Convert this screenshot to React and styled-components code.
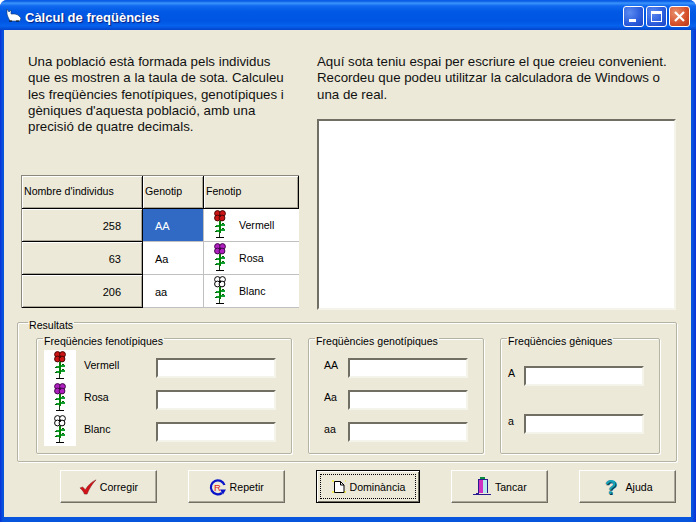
import React from 'react';
import styled, { createGlobalStyle } from 'styled-components';

const GlobalStyle = createGlobalStyle`
  html, body {
    margin: 0;
    padding: 0;
    background: #fff;
  }
  * {
    box-sizing: border-box;
  }
`;

const Window = styled.div`
  width: 696px;
  height: 522px;
  display: flex;
  flex-direction: column;
  overflow: hidden;
  border-radius: 7px 7px 0 0;
  font-family: "Liberation Sans", Arial, sans-serif;
  color: #000;
  background: linear-gradient(90deg, #0831d9 0, #0855dd 3px, #0855dd 692px, #0831d9 696px);
`;

const TitleBar = styled.div`
  height: 30px;
  flex: none;
  display: flex;
  align-items: center;
  padding: 2px 6px 0 6px;
  background: linear-gradient(
    180deg,
    #0a5be0 0%,
    #0a5fe8 4%,
    #3c95fb 10%,
    #0f68ee 20%,
    #0058e4 40%,
    #0056e2 70%,
    #0662ee 86%,
    #0445cc 100%
  );
`;

const TitleText = styled.span`
  margin-left: 3px;
  padding-top: 2px;
  color: #fff;
  font-size: 13px;
  font-weight: bold;
  text-shadow: 1px 1px 1px #0a1f80;
  white-space: nowrap;
`;

const TitleButtons = styled.div`
  margin-left: auto;
  display: flex;
  gap: 2px;
`;

const TitleButton = styled.div`
  width: 21px;
  height: 21px;
  border: 1px solid #fff;
  border-radius: 3px;
  display: flex;
  align-items: center;
  justify-content: center;
  background: ${(p) =>
    p.$close
      ? 'radial-gradient(circle at 30% 30%, #e9906f, #d5502a 60%, #b8391a)'
      : 'radial-gradient(circle at 30% 30%, #5c8bf0, #2a5cdc 60%, #1c44c4)'};
`;

const Client = styled.div`
  flex: 1;
  margin: 0 5px 5px 4px;
  padding: 0 15px 0 13px;
  background: #ece9d8;
  display: flex;
  flex-direction: column;
`;

const TopRow = styled.div`
  height: 283px;
  flex: none;
  display: grid;
  grid-template-columns: 300px 359px;
`;

const LeftColumn = styled.div`
  padding-top: 24px;
`;

const RightColumn = styled.div`
  padding-top: 24px;
`;

const Intro = styled.p`
  margin: 0 0 0 ${(p) => p.$indent || 0}px;
  font-size: 13.3px;
  line-height: 16.25px;
  white-space: nowrap;
  color: #111;
`;

const FreqTable = styled.div`
  margin: 40px 0 0 4px;
  width: 278px;
  display: grid;
  grid-template-columns: 121px 61px 95px;
  grid-auto-rows: 33px;
  border-top: 1px solid #8a887c;
  border-left: 1px solid #8a887c;
  font-size: 10.6px;
`;

const HeadCell = styled.div`
  display: flex;
  align-items: center;
  padding-left: 2px;
  padding-bottom: 3px;
  background: #ece9d8;
  border-right: 1px solid #000;
  border-bottom: 1px solid #000;
  box-shadow: inset 1px 1px 0 #fff, inset -1px -1px 0 #aca899;
`;

const CountCell = styled(HeadCell)`
  justify-content: flex-end;
  padding: 1px 21px 0 0;
  font-size: 11px;
`;

const GenoCell = styled.div`
  display: flex;
  align-items: center;
  padding: 1px 0 0 12px;
  font-size: 11px;
  background: ${(p) => (p.$selected ? '#316ac5' : '#fff')};
  color: ${(p) => (p.$selected ? '#fff' : '#000')};
  border-right: 1px solid #c0c0c0;
  border-bottom: 1px solid #c0c0c0;
`;

const PhenoCell = styled.div`
  display: flex;
  align-items: center;
  gap: 3px;
  background: #fff;
  border-bottom: 1px solid #c0c0c0;
`;

const Memo = styled.div`
  margin-top: 16px;
  height: 191px;
  background: #fff;
  border-style: solid;
  border-width: 2px;
  border-color: #716f64 #f5f4ea #f5f4ea #716f64;
`;

const Group = styled.fieldset`
  margin: 0;
  min-width: 0;
  padding: ${(p) => p.$padding};
  width: ${(p) => p.$width}px;
  height: ${(p) => p.$height}px;
  border: 1px solid #b5b3a3;
  box-shadow: inset 1px 1px 0 #fff, 1px 1px 0 #fff;
  border-radius: 2px;
`;

const GroupTitle = styled.legend`
  margin-left: ${(p) => p.$indent}px;
  padding: 6px 1px 0;
  font-size: 10.6px;
  line-height: 13px;
  white-space: nowrap;
`;

const GroupsRow = styled.div`
  margin-top: -3px;
  display: flex;
  gap: 16px;
`;

const FieldRow = styled.div`
  height: ${(p) => p.$height || 32}px;
  display: flex;
  align-items: flex-start;
  font-size: 10.6px;
`;

const FieldLabel = styled.span`
  width: ${(p) => p.$width}px;
  flex: none;
  margin-top: 9px;
  line-height: 13px;
`;

const FieldInput = styled.div`
  width: 120px;
  height: 20px;
  margin-top: 8px;
  flex: none;
  background: #fff;
  border-style: solid;
  border-width: 2px;
  border-color: #716f64 #f5f4ea #f5f4ea #716f64;
`;

const IconBox = styled.div`
  width: 32px;
  height: 32px;
  flex: none;
  margin-right: 8px;
  background: #fff;
`;

const ButtonRow = styled.div`
  margin: 8px 0 0 43px;
  display: flex;
  gap: 31px;
`;

const Button = styled.button`
  width: ${(p) => (p.$focused ? 105 : 97)}px;
  height: 33px;
  padding: 0;
  display: flex;
  align-items: center;
  justify-content: center;
  gap: 3px;
  position: relative;
  background: #ece9d8;
  color: #000;
  font-family: inherit;
  font-size: 10.6px;
  border-style: solid;
  border-width: 1px;
  border-color: ${(p) => (p.$focused ? '#000' : '#fff #716f64 #716f64 #fff')};
  box-shadow: ${(p) =>
    p.$focused
      ? 'inset 1px 1px 0 #fff, inset -1px -1px 0 #716f64'
      : 'inset -1px -1px 0 #aca899'};
  outline: ${(p) => (p.$focused ? '1px dotted #000' : 'none')};
  outline-offset: ${(p) => (p.$focused ? '-5px' : '0')};
`;

const HelpMark = styled.span`
  width: 16px;
  margin-right: 4px;
  font-size: 20px;
  line-height: 24px;
  font-weight: bold;
  color: #14a0b8;
  text-shadow: 1px 1px 0 #0b3b50;
`;

function Flower({ color, dark }) {
  const centers = [
    [13.5, 4.5],
    [18.5, 4.5],
    [13.5, 9],
    [18, 9],
  ];
  return (
    <svg width="32" height="32" viewBox="0 0 32 32" style={{ flex: 'none', display: 'block' }}>
      {centers.map(([cx, cy]) => (
        <circle key={cx + '-' + cy} cx={cx} cy={cy} r="2.9" fill={color} stroke={dark} strokeWidth="1" />
      ))}
      <circle cx="16" cy="6.8" r="1.2" fill={dark} />
      <g shapeRendering="crispEdges">
        <rect x="15" y="12" width="2" height="12" fill="#008000" />
        <rect x="15" y="24" width="1" height="4" fill="#1a3a1a" />
        <rect x="12" y="16" width="3" height="2" fill="#10a030" />
        <rect x="17" y="15" width="4" height="2" fill="#10a030" />
        <rect x="18" y="14" width="2" height="1" fill="#006000" />
        <rect x="11" y="17" width="2" height="1" fill="#006000" />
        <rect x="12" y="21" width="3" height="2" fill="#10a030" />
        <rect x="17" y="20" width="4" height="2" fill="#10a030" />
        <rect x="18" y="19" width="2" height="1" fill="#006000" />
        <rect x="11" y="22" width="2" height="1" fill="#006000" />
        <rect x="12" y="28" width="8" height="1" fill="#000" />
      </g>
    </svg>
  );
}

const RED = { color: '#cc1414', dark: '#4a0808' };
const PINK = { color: '#b020c0', dark: '#400848' };
const WHITE = { color: '#fff', dark: '#000' };

function TitleIcon() {
  return (
    <svg width="16" height="14" viewBox="0 0 16 14">
      <path d="M1 0l2 3 2-2 0 4 4 0 3 1 3 3-1 3H4L2 8 1 5z" fill="#fff" stroke="#123a70" strokeWidth="0.6" />
      <path d="M3 12h3M10 12h3" stroke="#111" strokeWidth="1.2" />
    </svg>
  );
}

function CheckIcon() {
  return (
    <svg width="18" height="16" viewBox="0 0 20 18">
      <path d="M1 10l3-1 3 3C10 7 14 3 19 1c-4 4-8 10-10 16H6C5 14 3 12 1 10z" fill="#d2141a" stroke="#701010" strokeWidth="0.5" />
    </svg>
  );
}

function RepeatIcon() {
  return (
    <svg width="18" height="18" viewBox="0 0 18 18">
      <path d="M13 15A7 7 0 1 1 15.500 7" fill="none" stroke="#0a14c8" strokeWidth="2.2" />
      <path d="M11 11.500l6 0-3 5z" fill="#0a14c8" />
      <text x="8.500" y="12.500" textAnchor="middle" fontSize="9.500" fontFamily="Liberation Sans" fill="#e01818">R</text>
    </svg>
  );
}

function PageIcon() {
  return (
    <svg width="16" height="16" viewBox="0 0 16 16">
      <path d="M1 2h2M2 1v2M13 13h2M14 12v2M1 13h2M2 12v2M14 2h1" stroke="#f4ee50" strokeWidth="1.4" />
      <path d="M3.500 2.500h6l3.500 3.500v7.500h-9.500z" fill="#fff" stroke="#000" strokeWidth="1" />
      <path d="M9.500 2.500v3.500h3.500" fill="none" stroke="#000" strokeWidth="1" />
    </svg>
  );
}

function DoorIcon() {
  return (
    <svg width="19" height="19" viewBox="0 0 19 19" shapeRendering="crispEdges">
      <rect x="7" y="0" width="5" height="2" fill="#0a8a40" />
      <rect x="10" y="3" width="4" height="13" fill="#b8e8f0" />
      <rect x="6" y="3" width="4" height="13" fill="#d030c0" />
      <rect x="5" y="2" width="1" height="14" fill="#2a1a90" />
      <rect x="14" y="2" width="1" height="14" fill="#2a1a90" />
      <rect x="5" y="2" width="10" height="1" fill="#2a1a90" />
      <rect x="0" y="17" width="18" height="1" fill="#2a1a90" />
      <rect x="3" y="16" width="3" height="1" fill="#2a1a90" />
    </svg>
  );
}

export default function App() {
  return (
    <>
      <GlobalStyle />
      <Window>
        <TitleBar>
          <TitleIcon />
          <TitleText>Càlcul de freqüències</TitleText>
          <TitleButtons>
            <TitleButton>
              <svg width="13" height="13" viewBox="0 0 13 13" shapeRendering="crispEdges">
                <rect x="2" y="9" width="7" height="3" fill="#fff" />
              </svg>
            </TitleButton>
            <TitleButton>
              <svg width="13" height="13" viewBox="0 0 13 13" shapeRendering="crispEdges">
                <path d="M1 1h11v11H1zM2 4v7h9V4z" fill="#fff" fillRule="evenodd" />
              </svg>
            </TitleButton>
            <TitleButton $close>
              <svg width="13" height="13" viewBox="0 0 13 13">
                <path d="M2 2l9 9M11 2l-9 9" stroke="#fff" strokeWidth="2.2" />
              </svg>
            </TitleButton>
          </TitleButtons>
        </TitleBar>
        <Client>
          <TopRow>
            <LeftColumn>
              <Intro $indent={11}>
                Una població està formada pels individus<br />
                que es mostren a la taula de sota. Calculeu<br />
                les freqüències fenotípiques, genotípiques i<br />
                gèniques d'aquesta població, amb una<br />
                precisió de quatre decimals.
              </Intro>
              <FreqTable>
                <HeadCell>Nombre d'individus</HeadCell>
                <HeadCell>Genotip</HeadCell>
                <HeadCell>Fenotip</HeadCell>
                <CountCell>258</CountCell>
                <GenoCell $selected>AA</GenoCell>
                <PhenoCell><Flower {...RED} />Vermell</PhenoCell>
                <CountCell>63</CountCell>
                <GenoCell>Aa</GenoCell>
                <PhenoCell><Flower {...PINK} />Rosa</PhenoCell>
                <CountCell>206</CountCell>
                <GenoCell>aa</GenoCell>
                <PhenoCell><Flower {...WHITE} />Blanc</PhenoCell>
              </FreqTable>
            </LeftColumn>
            <RightColumn>
              <Intro>
                Aquí sota teniu espai per escriure el que creieu convenient.<br />
                Recordeu que podeu utilitzar la calculadora de Windows o<br />
                una de real.
              </Intro>
              <Memo />
            </RightColumn>
          </TopRow>

          <Group $width={660} $height={149} $padding="0 15px 0 18px">
            <GroupTitle $indent={-8}>Resultats</GroupTitle>
            <GroupsRow>
              <Group $width={256} $height={125} $padding="2px 0 0 7px">
                <GroupTitle $indent={-1}>Freqüències fenotípiques</GroupTitle>
                <FieldRow>
                  <IconBox><Flower {...RED} /></IconBox>
                  <FieldLabel $width={72}>Vermell</FieldLabel>
                  <FieldInput />
                </FieldRow>
                <FieldRow>
                  <IconBox><Flower {...PINK} /></IconBox>
                  <FieldLabel $width={72}>Rosa</FieldLabel>
                  <FieldInput />
                </FieldRow>
                <FieldRow>
                  <IconBox><Flower {...WHITE} /></IconBox>
                  <FieldLabel $width={72}>Blanc</FieldLabel>
                  <FieldInput />
                </FieldRow>
              </Group>
              <Group $width={176} $height={125} $padding="2px 0 0 15px">
                <GroupTitle $indent={-9}>Freqüències genotípiques</GroupTitle>
                <FieldRow>
                  <FieldLabel $width={24}>AA</FieldLabel>
                  <FieldInput />
                </FieldRow>
                <FieldRow>
                  <FieldLabel $width={24}>Aa</FieldLabel>
                  <FieldInput />
                </FieldRow>
                <FieldRow>
                  <FieldLabel $width={24}>aa</FieldLabel>
                  <FieldInput />
                </FieldRow>
              </Group>
              <Group $width={160} $height={125} $padding="10px 0 0 7px">
                <GroupTitle $indent={-1}>Freqüències gèniques</GroupTitle>
                <FieldRow $height={48}>
                  <FieldLabel $width={16}>A</FieldLabel>
                  <FieldInput />
                </FieldRow>
                <FieldRow $height={48}>
                  <FieldLabel $width={16}>a</FieldLabel>
                  <FieldInput />
                </FieldRow>
              </Group>
            </GroupsRow>
          </Group>

          <ButtonRow>
            <Button><CheckIcon />Corregir</Button>
            <Button><RepeatIcon />Repetir</Button>
            <Button $focused><PageIcon />Dominància</Button>
            <Button><DoorIcon />Tancar</Button>
            <Button><HelpMark>?</HelpMark>Ajuda</Button>
          </ButtonRow>
        </Client>
      </Window>
    </>
  );
}
